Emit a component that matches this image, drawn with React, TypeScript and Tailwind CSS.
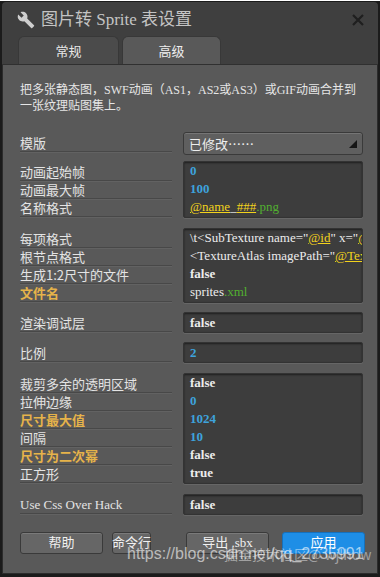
import React from 'react';

const serif = { fontFamily: '"Liberation Serif", "Noto Sans CJK SC", serif' };
const sans = { fontFamily: '"Noto Sans CJK SC", "Liberation Sans", sans-serif' };

function Label({ text, hot, h = 18 }: { text: string; hot?: boolean; h?: number }) {
  return (
    <div className="flex items-start" style={{ height: h }}>
      <span
        className={`block w-[152px] border-b border-[#484848] leading-[16px] text-[13px] shadow-[0_1px_0_#626262] ${hot ? 'text-[#e6b34a] font-bold' : 'text-[#e4e4e4]'}`}
        style={text.startsWith('Use') ? serif : sans}
      >
        {text}
      </span>
    </div>
  );
}

function Value({ children }: { children: React.ReactNode }) {
  return (
    <div className="h-[18px] px-[6px] leading-[18px] text-[13px] whitespace-nowrap overflow-hidden" style={serif}>
      {children}
    </div>
  );
}

const Blue = ({ t }: { t: string }) => <span className="text-[#3ea3dc] font-bold">{t}</span>;
const White = ({ t, bold }: { t: string; bold?: boolean }) => (
  <span className={`text-[#ececec] ${bold ? 'font-bold' : ''}`}>{t}</span>
);
const Yel = ({ t }: { t: string }) => <span className="text-[#f2d21c] underline">{t}</span>;
const Green = ({ t }: { t: string }) => <span className="text-[#52b030]">{t}</span>;

function Group({ labels, children }: { labels: { t: string; hot?: boolean }[]; children: React.ReactNode }) {
  return (
    <div className="flex gap-[11px]">
      <div className="flex flex-col pt-[3px]">
        {labels.map((l) => (
          <Label key={l.t} text={l.t} hot={l.hot} />
        ))}
      </div>
      <div className="w-[180px] bg-[#3d3d3d] rounded-[2px] border border-[#333] pb-[1px] shadow-[inset_0_1px_2px_rgba(0,0,0,0.5),0_1px_0_#666] flex flex-col">
        {children}
      </div>
    </div>
  );
}

function Single({ label, children }: { label: string; children: React.ReactNode }) {
  return (
    <div className="flex gap-[11px] items-center h-[21px]">
      <div className="pt-[3px]">
        <Label text={label} />
      </div>
      <div className="w-[180px] h-[21px] bg-[#3d3d3d] rounded-[2px] border border-[#333] shadow-[inset_0_1px_2px_rgba(0,0,0,0.5),0_1px_0_#666] flex items-center">
        <Value>{children}</Value>
      </div>
    </div>
  );
}

function Btn({ text, w, blue }: { text: string; w: number; blue?: boolean }) {
  return (
    <div
      className={`h-[22px] shrink-0 rounded-[3px] flex items-center justify-center whitespace-nowrap text-[13px] border ${blue ? 'bg-[#1e8ee6] border-[#1670bb] text-white' : 'bg-[#666] border-[#3a3a3a] text-[#f0f0f0] shadow-[inset_0_1px_0_#7a7a7a]'}`}
      style={{ width: w, ...serif }}
    >
      {text}
    </div>
  );
}

export default function App() {
  return (
    <div className="w-[380px] h-[577px] bg-[#1b1b1b] border-t border-white relative overflow-hidden" style={sans}>
      <div className="absolute left-[2px] right-[2px] top-[1px] bottom-[3px] bg-[#3f3f3f] rounded-t-[4px] flex flex-col">
        {/* title bar */}
        <div className="h-[35px] flex items-center pl-[15px] pr-[14px] pt-[1px]">
          <svg width="18" height="18" viewBox="0 0 24 24" fill="#cfcfcf">
            <path d="M22.7 19 13.6 9.9c.9-2.3.4-5-1.5-6.9-2-2-5-2.4-7.4-1.3L9 6 6 9 1.6 4.7C.4 7.1.9 10.1 2.9 12.1c1.9 1.9 4.6 2.4 6.9 1.5l9.1 9.1c.4.4 1 .4 1.4 0l2.3-2.3c.5-.4.5-1.1.1-1.4z" />
          </svg>
          <span className="ml-[6px] text-[17px] text-[#c4c4c4]" style={serif}>
            图片转 Sprite 表设置
          </span>
          <svg className="ml-auto" width="12" height="12" viewBox="0 0 12 12" stroke="#1f1f1f" strokeWidth="2.2">
            <path d="M1 1l10 10M11 1 1 11" />
          </svg>
        </div>
        {/* tabs */}
        <div className="h-[28px] flex items-end gap-[3px] pl-[16px] border-b border-[#303030]">
          <div className="w-[101px] h-[28px] rounded-t-[6px] bg-[#4b4b4b] border border-b-0 border-[#383838] flex items-center justify-center text-[13px] text-[#e8e8e8]">
            常规
          </div>
          <div className="w-[99px] h-[28px] rounded-t-[6px] bg-[#595959] border border-b-0 border-[#383838] flex items-center justify-center text-[13px] text-[#eeeeee]">
            高级
          </div>
        </div>
        {/* content */}
        <div className="flex-1 bg-[#595959] border-x border-b border-[#2c2c2c] pl-[17px] pt-[17px] flex flex-col">
          <p className="text-[12px] leading-[16px] text-[#e6e6e6] w-[340px]" style={serif}>
            把多张静态图，SWF动画（AS1，AS2或AS3）或GIF动画合并到一张纹理贴图集上。
          </p>
          <div className="mt-[18px] flex gap-[11px] items-start h-[23px]">
            <div className="pt-[3px]">
              <Label text="模版" h={23} />
            </div>
            <div className="w-[180px] h-[23px] rounded-[3px] bg-[#5f5f5f] border border-[#3a3a3a] shadow-[inset_0_1px_0_#757575] flex items-center px-[5px] text-[13px] text-[#eeeeee]">
              <span>已修改……</span>
              <svg className="ml-auto" width="8" height="8" viewBox="0 0 8 8">
                <path d="M8 0V8H0Z" fill="#151515" />
              </svg>
            </div>
          </div>

          <div className="mt-[6px]">
            <Group labels={[{ t: '动画起始帧' }, { t: '动画最大帧' }, { t: '名称格式' }]}>
              <Value><Blue t="0" /></Value>
              <Value><Blue t="100" /></Value>
              <Value>
                <Yel t="@name" />
                <White t="_" />
                <Yel t="###" />
                <Green t=".png" />
              </Value>
            </Group>
          </div>

          <div className="mt-[10px]">
            <Group labels={[{ t: '每项格式' }, { t: '根节点格式' }, { t: '生成1:2尺寸的文件' }, { t: '文件名', hot: true }]}>
              <Value>
                <White t={'\\t<SubTexture name="'} />
                <Yel t="@id" />
                <White t={'" x="'} />
                <Yel t="@x" />
              </Value>
              <Value>
                <White t={'<TextureAtlas imagePath="'} />
                <Yel t="@TextureName" />
              </Value>
              <Value><White t="false" bold /></Value>
              <Value>
                <White t="sprites" />
                <Green t=".xml" />
              </Value>
            </Group>
          </div>

          <div className="mt-[9px]">
            <Single label="渲染调试层"><White t="false" bold /></Single>
          </div>
          <div className="mt-[9px]">
            <Single label="比例"><Blue t="2" /></Single>
          </div>

          <div className="mt-[10px]">
            <Group
              labels={[
                { t: '裁剪多余的透明区域' },
                { t: '拉伸边缘' },
                { t: '尺寸最大值', hot: true },
                { t: '间隔' },
                { t: '尺寸为二次幂', hot: true },
                { t: '正方形' },
              ]}
            >
              <Value><White t="false" bold /></Value>
              <Value><Blue t="0" /></Value>
              <Value><Blue t="1024" /></Value>
              <Value><Blue t="10" /></Value>
              <Value><White t="false" bold /></Value>
              <Value><White t="true" bold /></Value>
            </Group>
          </div>

          <div className="mt-[10px]">
            <Single label="Use Css Over Hack"><White t="false" bold /></Single>
          </div>

          <div className="mt-[17px] flex items-center">
            <Btn text="帮助" w={83} />
            <div className="ml-[9px] text-[12px]">
              <Btn text="命令行" w={39} />
            </div>
            <div className="ml-[35px]">
              <Btn text="导出 .sbx" w={83} />
            </div>
            <div className="ml-[13px]">
              <Btn text="应用" w={83} blue />
            </div>
          </div>
        </div>
      </div>
      {/* watermark */}
      <div className="absolute left-[127px] top-[544px] text-[16px] leading-[18px] text-white/60 whitespace-nowrap" style={{ fontFamily: '"Liberation Sans", sans-serif' }}>
        https://blog.csdn.net/qq_2735991
      </div>
      <div className="absolute left-[224px] top-[544px] text-[14px] leading-[18px] text-white/45 whitespace-nowrap" style={sans}>
        掘金技术社区@ wjlhow
      </div>
    </div>
  );
}
